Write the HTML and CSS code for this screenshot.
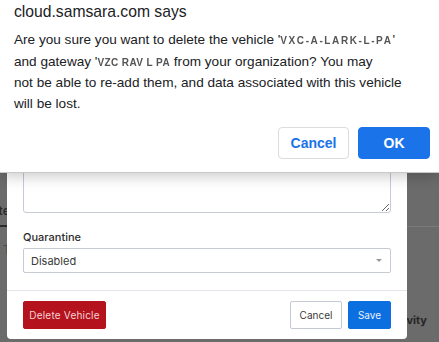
FILE: index.html
```html
<!DOCTYPE html>
<html>
<head>
<meta charset="utf-8">
<link rel="stylesheet" href="styles.css">
</head>
<body>
<div class="page">
  <div class="tabs">
    <span class="tab active">Date</span>
  </div>
  <div class="row">Time</div>
  <div class="activity">Activity</div>
</div>

<div class="modal">
  <div class="modal-body">
    <textarea class="textarea"></textarea>
    <label class="label">Quarantine</label>
    <div class="select">
      <span>Disabled</span>
      <span class="caret"></span>
    </div>
  </div>
  <div class="modal-footer">
    <button class="btn btn-danger">Delete Vehicle</button>
    <div class="footer-right">
      <button class="btn btn-default">Cancel</button>
      <button class="btn btn-primary">Save</button>
    </div>
  </div>
</div>

<div class="dialog">
  <div class="dialog-title">cloud.samsara.com says</div>
  <p class="dialog-text">Are you sure you want to delete the vehicle '<span class="redacted r1">VXC-A-LARK-L-PA</span>'<br>and gateway '<span class="redacted r2">VZC RAV L PA</span> from your organization? You may<br>not be able to re-add them, and data associated with this vehicle<br>will be lost.</p>
  <div class="dialog-actions">
    <button class="dbtn dbtn-cancel">Cancel</button>
    <button class="dbtn dbtn-ok">OK</button>
  </div>
</div>
</body>
</html>
```

FILE: styles.css
```css
html, body {
  margin: 0;
  padding: 0;
}
body {
  width: 439px;
  height: 342px;
  overflow: hidden;
  position: relative;
  background: #6b6b6b;
  font-family: Inter, "Liberation Sans", sans-serif;
}

/* background page (seen through the overlay) */
.page {
  padding-top: 200px;
}
.tabs {
  display: flex;
  border-bottom: 1px solid #7a7a7a;
  height: 27px;
  box-sizing: border-box;
}
.tab {
  font-size: 12px;
  font-weight: 600;
  color: #2b2b2b;
  margin-left: -17px;
  padding: 3px 0 0;
  border-bottom: 2px solid #2b2b2b;
  margin-bottom: -1px;
  width: 24px;
  overflow: hidden;
}
.row {
  font-size: 12px;
  color: #4a4a4a;
  padding: 15px 0 0 3px;
}
.activity {
  font-size: 11px;
  font-weight: 700;
  color: #262626;
  text-align: right;
  padding: 56px 12px 0 0;
}

/* modal */
.modal {
  position: absolute;
  left: 7px;
  width: 400px;
  bottom: 3px;
  background: #fff;
  border-radius: 0 0 4px 4px;
}
.modal-body {
  display: flex;
  flex-direction: column;
  padding: 0 16px 17px;
}
.textarea {
  display: block;
  height: 70px;
  border: 1px solid #c6cbd4;
  border-radius: 3px;
  resize: vertical;
  margin: 0 0 17px;
  padding: 0;
}
.label {
  font-size: 11px;
  font-weight: 500;
  color: #2e2e2e;
  line-height: 14px;
  margin-bottom: 4px;
}
.select {
  display: flex;
  align-items: center;
  justify-content: space-between;
  height: 25px;
  box-sizing: border-box;
  border: 1px solid #c6cbd4;
  border-radius: 2px;
  padding: 0 8px 0 7px;
  font-size: 11px;
  color: #3a3a3a;
}
.caret {
  width: 0;
  height: 0;
  border-left: 3px solid transparent;
  border-right: 3px solid transparent;
  border-top: 3px solid #999;
}
.modal-footer {
  display: flex;
  justify-content: space-between;
  border-top: 1px solid #e3e6ec;
  padding: 10px 16px;
}
.footer-right {
  display: flex;
  gap: 6px;
}
.btn {
  height: 28px;
  font-family: Inter, "Liberation Sans", sans-serif;
  font-size: 10px;
  border-radius: 2px;
  box-sizing: border-box;
  padding: 0;
}
.btn-danger {
  width: 83px;
  background: #b4121c;
  border: 1px solid #b4121c;
  color: #f3d3d6;
  letter-spacing: 0.2px;
}
.btn-default {
  width: 52px;
  background: #fff;
  border: 1px solid #c4c9d4;
  color: #3a3a3a;
}
.btn-primary {
  width: 43px;
  background: #0c6fe0;
  border: 1px solid #0c6fe0;
  color: #e8f1fd;
}

/* browser confirm dialog */
.dialog {
  position: absolute;
  top: 0;
  left: 0;
  right: 0;
  height: 173px;
  box-sizing: border-box;
  background: #fff;
  border-bottom: 1px solid #c9c9c9;
  box-shadow: 0 3px 14px rgba(0, 0, 0, 0.22);
  padding: 2px 9px 0 14px;
  font-family: "Liberation Sans", Arial, sans-serif;
  color: #202124;
}
.dialog-title {
  font-size: 15.7px;
  line-height: 20px;
}
.dialog-text {
  margin: 8px 0 0;
  font-size: 13.6px;
  line-height: 20.7px;
}
.redacted {
  font-size: 10px;
  font-weight: 700;
  color: #555;
  filter: blur(0.7px);
  display: inline-block;
  white-space: nowrap;
}
.r1 {
  letter-spacing: 1.6px;
}
.r2 {
  letter-spacing: 0.4px;
}
.dialog-actions {
  display: flex;
  justify-content: flex-end;
  gap: 9px;
  margin-top: 12px;
}
.dbtn {
  height: 32px;
  border-radius: 4px;
  font-family: "Liberation Sans", Arial, sans-serif;
  font-size: 14px;
  font-weight: 700;
  box-sizing: border-box;
}
.dbtn-cancel {
  width: 71px;
  background: #fff;
  border: 1px solid #dadce0;
  color: #1a73e8;
}
.dbtn-ok {
  width: 72px;
  background: #1a73e8;
  border: 1px solid #1a73e8;
  color: #fff;
}
```
